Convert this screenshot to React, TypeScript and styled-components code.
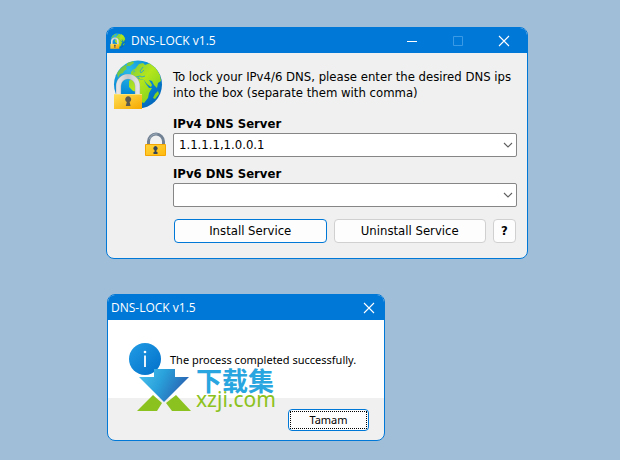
import React, { useState } from "react";
import styled, { createGlobalStyle, css } from "styled-components";

const blue = "#0078d7";
const uiFont = '"DejaVu Sans Condensed", "Noto Sans", sans-serif';
const titleFont = '"Open Sans", "Noto Sans", sans-serif';

const GlobalStyle = createGlobalStyle`
  *, *::before, *::after { box-sizing: border-box; }
  body {
    margin: 0;
    background: #a0bed8;
    color: #000;
    font: 12px/16px ${uiFont};
  }
  button, input { font: inherit; color: inherit; }
`;

const Desktop = styled.main`
  min-height: 100vh;
  display: flex;
  flex-direction: column;
  gap: 35px;
  padding: 27px 92px 19px 106px;
`;

const WindowFrame = styled.section<{ $dialog?: boolean }>`
  display: flex;
  flex-direction: column;
  border: 1px solid ${blue};
  border-radius: 8px;
  overflow: hidden;
  background: #f0f0f0;
  ${(p) =>
    p.$dialog &&
    css`
      width: 100%;
      max-width: 278px;
      margin-left: 1px;
    `}
`;

const TitleBar = styled.header`
  display: flex;
  align-items: center;
  height: 25px;
  padding-left: 3px;
  background: ${blue};
  color: #fff;
`;

const Title = styled.h1`
  flex: 1;
  margin: 0;
  font: 400 12px/25px ${titleFont};
  svg + & { margin-left: 5px; }
`;

const CaptionButton = styled.button<{ $width: number }>`
  display: flex;
  align-items: center;
  justify-content: center;
  width: ${(p) => p.$width}px;
  height: 25px;
  padding: 0;
  border: 0;
  background: transparent;
  color: #fff;
  &:disabled { color: #3b9ae6; }
`;

const Body = styled.form`
  display: grid;
  grid-template-columns: 50px 1fr;
  column-gap: 10px;
  padding: 7px 10px 15px 6px;
`;

const Intro = styled.p`
  margin: 9px 0 0;
  font-size: 13px;
  line-height: 16px;
`;

const FieldIcon = styled.div`
  display: flex;
  justify-content: flex-end;
  align-items: flex-end;
  margin-right: -4px;
  padding-bottom: 3px;
`;

const Field = styled.div`
  display: flex;
  flex-direction: column;
  padding: 5px 0 3px;
`;

const Label = styled.label`
  font-size: 13px;
  line-height: 18px;
  font-weight: 700;
`;

const Combo = styled.div`
  display: flex;
  height: 24px;
  border: 1px solid #868686;
  border-radius: 2px;
  background: #fff;
`;

const ComboInput = styled.input`
  flex: 1;
  min-width: 0;
  padding: 0 5px;
  border: 0;
  outline: 0;
  background: transparent;
  font-size: 13px;
`;

const ComboArrow = styled.button`
  display: flex;
  align-items: center;
  justify-content: center;
  width: 17px;
  padding: 0;
  border: 0;
  background: transparent;
  color: #606060;
`;

const Actions = styled.div`
  grid-column: 2;
  display: grid;
  grid-template-columns: 1fr 1fr 23px;
  column-gap: 7px;
  padding: 9px 1px 0;
`;

const PushButton = styled.button<{ $primary?: boolean; $bold?: boolean }>`
  height: 24px;
  padding: 0;
  border: 1px solid ${(p) => (p.$primary ? blue : "#d0d0d0")};
  border-radius: 4px;
  background: #fdfdfd;
  font-size: 13px;
  line-height: 22px;
  font-weight: ${(p) => (p.$bold ? 700 : 400)};
`;

const MessageArea = styled.div`
  position: relative;
  display: flex;
  align-items: center;
  gap: 9px;
  height: 78px;
  padding-left: 21px;
  background: #fff;
`;

const Message = styled.p`
  margin: 2px 0 0;
  font: 11px/16px "Noto Sans", sans-serif;
`;

const DialogFooter = styled.footer`
  display: flex;
  justify-content: flex-end;
  padding: 11px 15px 9px;
`;

const OkButton = styled.button`
  display: flex;
  width: 81px;
  height: 22px;
  padding: 1px;
  border: 1px solid ${blue};
  border-radius: 4px;
  background: #fdfdfd;
`;

const FocusRing = styled.span`
  flex: 1;
  border: 1px dotted #000;
  font: 11px/16px "Noto Sans", sans-serif;
  text-align: center;
`;

const Watermark = styled.div`
  position: absolute;
  left: 29px;
  top: 49px;
  z-index: 1;
  display: flex;
  gap: 5px;
  pointer-events: none;
`;

const WatermarkText = styled.div`
  display: flex;
  flex-direction: column;
  color: #8cc220;
  font: 21px/16px "Noto Sans", sans-serif;
`;

const WatermarkName = styled.span`
  color: #29a6df;
  font: 700 26px/22px "Noto Sans CJK SC", sans-serif;
`;

function GlobeIcon({ size, id }: { size: number; id: string }) {
  return (
    <svg width={size} height={size} viewBox="0 0 50 50" aria-hidden="true">
      <defs>
        <radialGradient id={`${id}-sea`} cx=".3" cy=".2" r=".85">
          <stop offset="0" stopColor="#2cbbe8" />
          <stop offset=".55" stopColor="#078bd7" />
          <stop offset="1" stopColor="#0369bd" />
        </radialGradient>
        <linearGradient id={`${id}-land`} gradientUnits="userSpaceOnUse" x1="10" y1="4" x2="46" y2="38">
          <stop offset="0" stopColor="#6cc24a" />
          <stop offset=".5" stopColor="#b4e61c" />
          <stop offset="1" stopColor="#7bd01f" />
        </linearGradient>
        <linearGradient id={`${id}-body`} x1="0" y1="0" x2="1" y2="1">
          <stop offset="0" stopColor="#ffdf58" />
          <stop offset="1" stopColor="#f6a800" />
        </linearGradient>
        <linearGradient id={`${id}-metal`} x1="0" y1="0" x2="1" y2="0">
          <stop offset="0" stopColor="#e4e4e6" />
          <stop offset=".5" stopColor="#c4c6ca" />
          <stop offset="1" stopColor="#e2e3e5" />
        </linearGradient>
        <clipPath id={`${id}-disc`}><circle cx="25" cy="24.5" r="24" /></clipPath>
      </defs>
      <circle cx="25" cy="24.5" r="24" fill={`url(#${id}-sea)`} />
      <g clipPath={`url(#${id}-disc)`} fill={`url(#${id}-land)`}>
        <path d="M4 13 8 8l4-3 2 1-1 2 1 1-3 2-1 2-3 1-2 4Z" />
        <path d="m14 3 6-2 1 2-4 3-3 0Z" />
        <path d="m18 12 2-2 1 2-1 3-2 0Z" />
        <path d="m22 9 4-5 4-1 2 2 5-2 6 5 4 7 1 6-3 2-1 5-3-3-2-4-3-1 3 5-1 2-4-3-3-4-4-1-2-2-1 2-3-2-3 1-1-3 3-1 2-3-3-1Z" />
        <path d="m16 21 3-3 4-1 3 2 5 1 2 4 3 4 3 0-3 5-1 5-4 5-3-1-1-6-2-4-5-1-4-4Z" />
        <path d="m42 34 3-3 1 3-4 5-2-1Z" />
      </g>
      <path d="m23 17 4-1 2 1 3-1m-2-9-3 4 1 2 3-3" fill="none" stroke="#2ba5c8" strokeWidth=".9" />
      <path d="M5.5 35V26a9.5 9.5 0 0 1 19 0v9" fill="none" stroke="#a5adb5" strokeWidth="5.2" />
      <path d="M5.5 35V26a9.5 9.5 0 0 1 19 0v9" fill="none" stroke={`url(#${id}-metal)`} strokeWidth="4.4" />
      <path d="M1 34h28v15H1z" fill={`url(#${id}-body)`} />
      <path d="M1 34.5h28" stroke="#ffe270" />
      <path d="M13.8 42a3 3 0 1 1 2.8 0l1 4h-4.8Z" fill="#5c5a50" />
    </svg>
  );
}

function PadlockIcon() {
  return (
    <svg width="22" height="25" viewBox="0 0 22 25" aria-hidden="true">
      <defs>
        <linearGradient id="padlock-body" x1="0" y1="0" x2="1" y2="1">
          <stop offset="0" stopColor="#ffd43c" />
          <stop offset="1" stopColor="#ffb90e" />
        </linearGradient>
      </defs>
      <path d="M3.5 13V9.5a7.5 7.5 0 0 1 15 0V13" fill="none" stroke="#728294" strokeWidth="3" />
      <path d="M4.5 7a7 7 0 0 1 8-5" fill="none" stroke="#a0adb9" />
      <path d="M.5 12.5h20v11H.5z" fill="url(#padlock-body)" stroke="#f5a500" />
      <path d="M9.5 18a2 2 0 1 1 2 0v2h1v2h-4v-2h1Z" fill="#36465a" />
    </svg>
  );
}

function CloseGlyph() {
  return (
    <svg width="12" height="12" viewBox="0 0 12 12" aria-hidden="true">
      <path d="m1 1 10 10M11 1 1 11" stroke="currentColor" strokeWidth="1.1" />
    </svg>
  );
}

function InfoIcon() {
  return (
    <svg width="32" height="32" viewBox="0 0 32 32" aria-hidden="true">
      <defs>
        <linearGradient id="info" x1="0" y1="0" x2="1" y2="1">
          <stop stopColor="#229ce4" />
          <stop offset="1" stopColor="#006fc9" />
        </linearGradient>
      </defs>
      <circle cx="16" cy="16" r="16" fill="url(#info)" />
      <circle cx="16" cy="9" r="1.3" fill="#fff" />
      <path d="M16 12.5V24" stroke="#fff" strokeWidth="1.8" />
    </svg>
  );
}

function DownloadLogo() {
  return (
    <svg width="54" height="42" viewBox="0 0 54 42" aria-hidden="true">
      <defs>
        <linearGradient id="download" x1="0" y1="0" x2="1" y2=".35">
          <stop stopColor="#4cc4f0" />
          <stop offset=".5" stopColor="#29a0da" />
          <stop offset="1" stopColor="#2964b3" />
        </linearGradient>
      </defs>
      <path d="M17 0h21v8h14L27 33 2 8h15Z" fill="url(#download)" />
      <path d="m16 26 9 8-5 8H0Zm23 0 15 16H35l-6-8Z" fill="#8cc220" />
    </svg>
  );
}

type ServerFieldProps = { id: string; label: string; initial: string };

function ServerField({ id, label, initial }: ServerFieldProps) {
  const [value, setValue] = useState(initial);
  return (
    <Field>
      <Label htmlFor={id}>{label}</Label>
      <Combo>
        <ComboInput id={id} value={value} onChange={(e) => setValue(e.target.value)} />
        <ComboArrow type="button" aria-label={`${label} list`}>
          <svg width="10" height="6" viewBox="0 0 10 6" aria-hidden="true">
            <path d="m1 1 4 4 4-4" fill="none" stroke="currentColor" strokeWidth="1.1" />
          </svg>
        </ComboArrow>
      </Combo>
    </Field>
  );
}

export default function App() {
  return (
    <Desktop>
      <GlobalStyle />
      <WindowFrame>
        <TitleBar>
          <GlobeIcon size={16} id="small-globe" />
          <Title>DNS-LOCK v1.5</Title>
          <CaptionButton $width={46} aria-label="Minimize">
            <svg width="12" height="12" viewBox="0 0 12 12" aria-hidden="true">
              <path d="M1 6.5h10" stroke="currentColor" />
            </svg>
          </CaptionButton>
          <CaptionButton $width={46} aria-label="Maximize" disabled>
            <svg width="12" height="12" viewBox="0 0 12 12" aria-hidden="true">
              <path d="M1.5 1.5h9v9h-9z" fill="none" stroke="currentColor" />
            </svg>
          </CaptionButton>
          <CaptionButton $width={46} aria-label="Close"><CloseGlyph /></CaptionButton>
        </TitleBar>
        <Body onSubmit={(e) => e.preventDefault()}>
          <GlobeIcon size={50} id="large-globe" />
          <Intro>
            To lock your IPv4/6 DNS, please enter the desired DNS ips into the box (separate them with comma)
          </Intro>
          <FieldIcon><PadlockIcon /></FieldIcon>
          <ServerField id="ipv4" label="IPv4 DNS Server" initial="1.1.1.1,1.0.0.1" />
          <FieldIcon />
          <ServerField id="ipv6" label="IPv6 DNS Server" initial="" />
          <Actions>
            <PushButton type="button" $primary>Install Service</PushButton>
            <PushButton type="button">Uninstall Service</PushButton>
            <PushButton type="button" $bold>?</PushButton>
          </Actions>
        </Body>
      </WindowFrame>

      <WindowFrame $dialog role="dialog" aria-label="DNS-LOCK v1.5">
        <TitleBar>
          <Title>DNS-LOCK v1.5</Title>
          <CaptionButton $width={30} aria-label="Close"><CloseGlyph /></CaptionButton>
        </TitleBar>
        <MessageArea>
          <InfoIcon />
          <Message>The process completed successfully.</Message>
          <Watermark>
            <DownloadLogo />
            <WatermarkText>
              <WatermarkName>下载集</WatermarkName>
              <span>xzji.com</span>
            </WatermarkText>
          </Watermark>
        </MessageArea>
        <DialogFooter>
          <OkButton type="button"><FocusRing>Tamam</FocusRing></OkButton>
        </DialogFooter>
      </WindowFrame>
    </Desktop>
  );
}
